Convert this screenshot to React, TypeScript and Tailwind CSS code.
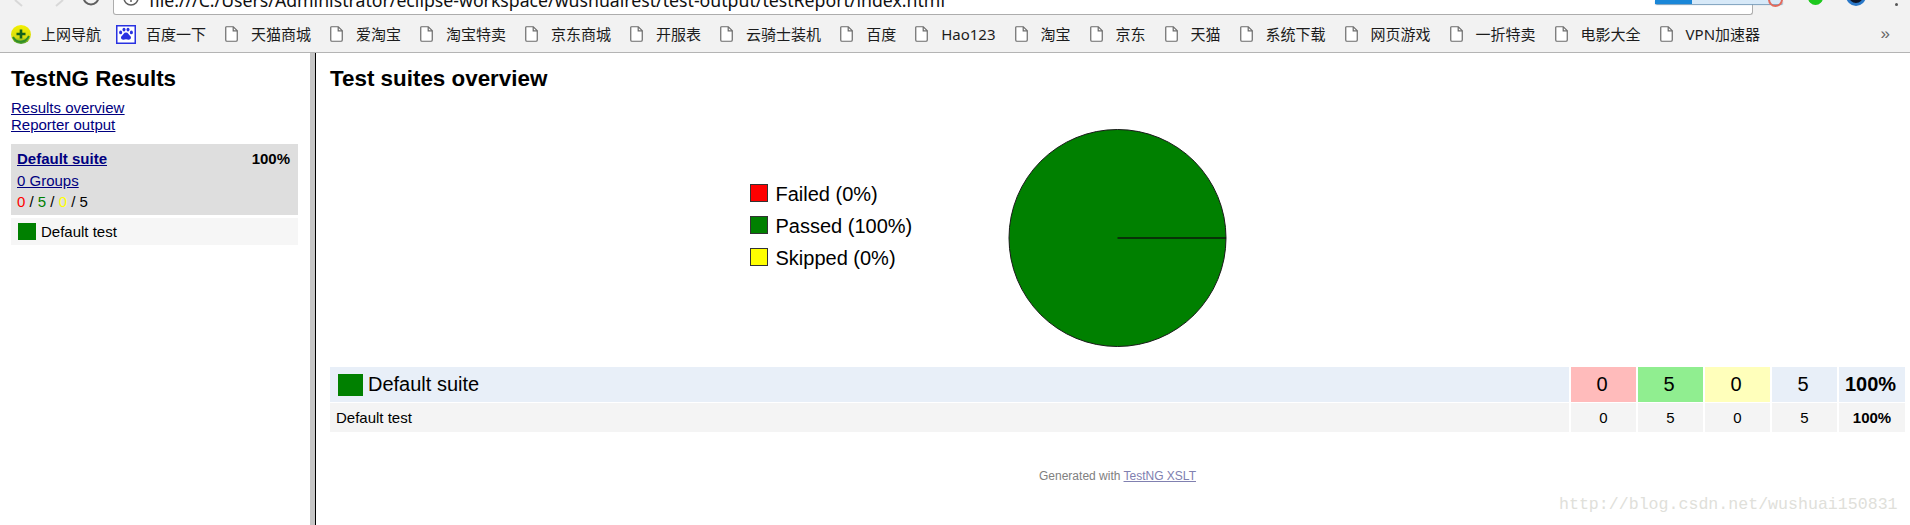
import type { ReactNode } from "react";

const bookmarks = [
	"天猫商城",
	"爱淘宝",
	"淘宝特卖",
	"京东商城",
	"开服表",
	"云骑士装机",
	"百度",
	"Hao123",
	"淘宝",
	"京东",
	"天猫",
	"系统下载",
	"网页游戏",
	"一折特卖",
	"电影大全",
	"VPN加速器",
];

const FileIcon = () => (
	<svg width="13" height="16" viewBox="0 0 13 16" fill="none" className="shrink-0">
		<path d="M1.500.75h6.800l3.950 3.900V14a1.250 1.250 0 0 1-1.250 1.250H2A1.250 1.250 0 0 1 .75 14V1.500A.75.75 0 0 1 1.500.75Z" stroke="#6b6b6b" strokeWidth="1.200" fill="#fff" />
		<path d="M8.200 1v3.800h4" stroke="#6b6b6b" strokeWidth="1.200" />
	</svg>
);

const NavIcon = () => (
	<svg width="20" height="19" viewBox="0 0 20 19" className="shrink-0">
		<defs>
			<linearGradient id="nav" x1="0" y1="0" x2="0" y2="1">
				<stop offset="0" stopColor="#f4f000" />
				<stop offset="0.65" stopColor="#d8dc10" />
				<stop offset="1" stopColor="#3f9a2a" />
			</linearGradient>
		</defs>
		<ellipse cx="10" cy="9.500" rx="10" ry="9.500" fill="url(#nav)" />
		<path d="M2 12c3 6 12 7 16-1" stroke="#2f8d2a" strokeWidth="2" fill="none" />
		<path d="M10 4.500v9M5.500 9h9" stroke="#14611c" strokeWidth="2.600" />
	</svg>
);

const PawIcon = () => (
	<svg width="20" height="19" viewBox="0 0 20 19" className="shrink-0">
		<rect x=".75" y=".75" width="18.500" height="17.500" fill="#fff" stroke="#2932e1" strokeWidth="1.500" />
		<g fill="#2932e1">
			<ellipse cx="4.600" cy="7.400" rx="1.500" ry="1.900" />
			<ellipse cx="8" cy="4.600" rx="1.500" ry="1.900" />
			<ellipse cx="12" cy="4.600" rx="1.500" ry="1.900" />
			<ellipse cx="15.400" cy="7.400" rx="1.500" ry="1.900" />
			<path d="M10 7.500c2.300 0 2.500 2.200 4 3.300 1.800 1.300 1 4-1.400 3.900-1 0-1.700-.4-2.600-.4s-1.600.4-2.600.4c-2.400.1-3.200-2.600-1.400-3.900 1.500-1.100 1.700-3.300 4-3.300Z" />
		</g>
	</svg>
);

const Bookmark = ({ icon, label, gap }: { icon: ReactNode; label: string; gap: string }) => (
	<div className={`flex h-[24px] shrink-0 items-center ${gap}`}>
		{icon}
		<span className="whitespace-nowrap">{label}</span>
	</div>
);

const BrowserChrome = () => (
	<div className="relative h-[53px] overflow-hidden border-b border-[#b4b4b4] bg-[#f2f2f2] font-['Noto_Sans','Noto_Sans_CJK_SC',sans-serif]">
		<div className="flex h-[15px] items-end">
			<svg width="113" height="15" viewBox="0 0 113 15" fill="none" className="shrink-0">
				<path d="M15 0 22 6" stroke="#d8d8d8" strokeWidth="2" />
				<path d="M63 0 56 6" stroke="#d8d8d8" strokeWidth="2" />
				<circle cx="91" cy="-3" r="7.500" stroke="#5f5f5f" strokeWidth="2" />
			</svg>
			<div className="flex h-[15px] w-[1640px] items-end overflow-hidden rounded-b-[3px] border border-t-0 border-[#adadad] bg-white pb-[5px] pl-[9px]">
				<svg width="16" height="16" viewBox="0 0 16 16" fill="none" className="mb-[3px] shrink-0">
					<circle cx="8" cy="8" r="7" stroke="#5f5f5f" strokeWidth="1.500" />
					<path d="M8 7v5" stroke="#5f5f5f" strokeWidth="1.500" />
				</svg>
				<span className="ml-[10px] whitespace-nowrap text-[17.700px] leading-[18px] text-[#111]">
					file:///C:/Users/Administrator/eclipse-workspace/wushuairest/test-output/testReport/index.html
				</span>
			</div>
		</div>
		<div className="flex h-[37px] items-center pt-[1px] pr-[20px] pl-[11px] text-[15px] text-[#1c1c1c]">
			<div className="flex flex-1 items-center gap-[19px]">
				<div className="flex gap-[15px]">
					<Bookmark icon={<NavIcon />} label="上网导航" gap="gap-[10px]" />
					<Bookmark icon={<PawIcon />} label="百度一下" gap="gap-[10px]" />
				</div>
				{bookmarks.map((label) => (
					<Bookmark key={label} icon={<FileIcon />} label={label} gap="gap-[13px]" />
				))}
			</div>
			<span className="font-['Liberation_Sans',sans-serif] text-[17px] text-[#666]">»</span>
		</div>
		{/* download toast and extension icons sticking out of the clipped toolbar */}
		<div className="absolute top-0 left-[1655px] flex h-[4px] w-[128px] rounded-b-[2px] bg-[#d7e9f8] shadow-[0_1px_1px_#7b9fbd]">
			<div className="w-[37px] bg-[#1a87d8]" />
		</div>
		<div className="absolute -top-[8px] left-[1768px] size-[15px] rounded-full border-2 border-[#e26a5c]" />
		<div className="absolute -top-[10px] left-[1808px] size-[15px] rounded-full bg-[#1ec81e]" />
		<div className="absolute -top-[14px] left-[1846px] size-[20px] rounded-full border-[3px] border-[#2a78c8] bg-[#0d1528]" />
		<div className="absolute top-[3px] left-[1895px] size-[3px] rounded-full bg-[#555]" />
	</div>
);

const Sidebar = () => (
	<aside className="w-[310px] shrink-0 pr-[12px] pl-[11px]">
		<h1 className="pt-[13px] text-[22.400px] leading-[26px] font-bold text-black">TestNG Results</h1>
		<div className="mt-[7px] flex flex-col text-[15px] leading-[17px] text-[#000080] underline">
			<a>Results overview</a>
			<a>Reporter output</a>
		</div>
		<div className="mt-[11px] bg-[#dedede] px-[6px] pt-[4px] pb-[3px] text-[15px] leading-[21px]">
			<div className="mb-[1px] flex justify-between pr-[2px]">
				<a className="font-bold text-[#000080] underline">Default suite</a>
				<span className="font-bold text-black">100%</span>
			</div>
			<a className="block text-[#000080] underline">0 Groups</a>
			<div className="text-black">
				<span className="text-[#ff0000]">0</span> / <span className="text-[#008000]">5</span> /{" "}
				<span className="text-[#ffff00]">0</span> / 5
			</div>
		</div>
		<div className="mt-[3px] flex h-[27px] items-center gap-[5px] bg-[#f6f6f6] pl-[7px] text-[15px] text-black">
			<div className="h-[17px] w-[18px] bg-[#008000]" />
			<span className="pt-[2px]">Default test</span>
		</div>
	</aside>
);

const legend = [
	{ label: "Failed (0%)", color: "bg-[#ff0000]" },
	{ label: "Passed (100%)", color: "bg-[#008000]" },
	{ label: "Skipped (0%)", color: "bg-[#ffff00]" },
];

const Chart = () => (
	<div className="mt-[36px] grid grid-cols-[1fr_auto_1fr] items-center">
		<div className="mr-[95px] mb-[26px] flex flex-col gap-[12px] justify-self-end text-[20px] leading-[18px] text-black">
			{legend.map((item) => (
				<div key={item.label} className="flex w-[163px] items-center gap-[8px]">
					<div className={`size-[18px] border border-[#333] ${item.color}`} />
					<span className="pt-[2px] whitespace-nowrap">{item.label}</span>
				</div>
			))}
		</div>
		<svg width="220" height="220" viewBox="0 0 220 220">
			<circle cx="109.500" cy="110" r="108.500" fill="#008000" stroke="#1a1a1a" strokeWidth="1" />
			<path d="M109.500 110H218" stroke="#0b1a0b" strokeWidth="1.500" />
		</svg>
		<div />
	</div>
);

const cols = "grid grid-cols-[1fr_65px_65px_65px_65px_66px] gap-x-[2px]";

const SuiteTable = () => (
	<div className="mt-[19px] flex flex-col gap-px">
		<div className={`${cols} h-[35px] text-[20px] text-black`}>
			<div className="flex items-center gap-[5px] bg-[#e8eff8] pl-[8px]">
				<div className="h-[22px] w-[25px] bg-[#008000]" />
				<span className="pb-[2px]">Default suite</span>
			</div>
			<div className="flex items-center justify-center bg-[#ffbbbb] pr-[3px] pb-[2px]">0</div>
			<div className="flex items-center justify-center bg-[#90ee90] pr-[3px] pb-[2px]">5</div>
			<div className="flex items-center justify-center bg-[#ffffbb] pr-[3px] pb-[2px]">0</div>
			<div className="flex items-center justify-center bg-[#e8eff8] pr-[3px] pb-[2px]">5</div>
			<div className="flex items-center justify-center bg-[#e8eff8] pr-[3px] pb-[2px] font-bold">100%</div>
		</div>
		<div className={`${cols} h-[29px] text-[15px] text-black`}>
			<div className="flex items-center bg-[#f4f4f4] pt-[2px] pl-[6px]">Default test</div>
			<div className="flex items-center justify-center bg-[#f4f4f4] pt-[2px]">0</div>
			<div className="flex items-center justify-center bg-[#f4f4f4] pt-[2px]">5</div>
			<div className="flex items-center justify-center bg-[#f4f4f4] pt-[2px]">0</div>
			<div className="flex items-center justify-center bg-[#f4f4f4] pt-[2px]">5</div>
			<div className="flex items-center justify-center bg-[#f4f4f4] pt-[2px] font-bold">100%</div>
		</div>
	</div>
);

export default function App() {
	return (
		<div className="relative flex h-[525px] w-[1910px] flex-col overflow-hidden bg-white font-['Liberation_Sans',Arial,sans-serif]">
			<BrowserChrome />
			<div className="flex flex-1">
				<Sidebar />
				<div className="w-[5px] shrink-0 bg-[#c6c6c6]" />
				<main className="flex-1 border-l border-black pr-[5px] pl-[14px]">
					<h1 className="pt-[13px] text-[22.400px] leading-[26px] font-bold text-black">Test suites overview</h1>
					<Chart />
					<SuiteTable />
					<p className="mt-[36px] text-center text-[12px] leading-[16px] text-[#808080]">
						Generated with <a className="text-[#8080b0] underline">TestNG XSLT</a>
					</p>
				</main>
			</div>
			<span className="absolute top-[495px] left-[1559px] font-['Liberation_Mono',monospace] text-[16.600px] leading-[20px] text-[#e0e0da]">
				http://blog.csdn.net/wushuai150831
			</span>
		</div>
	);
}
